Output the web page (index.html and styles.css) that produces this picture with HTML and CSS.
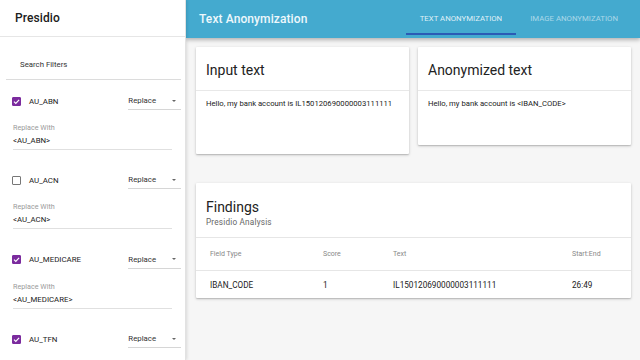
FILE: index.html
```html
<!DOCTYPE html>
<html lang="en">
<head>
<meta charset="utf-8">
<title>Presidio</title>
<link rel="stylesheet" href="styles.css">
</head>
<body>
<aside class="sidebar">
  <div class="side-head">Presidio</div>
  <div class="search">Search Filters</div>
  <div class="filters">
    <div class="filter">
      <div class="row">
        <span class="check on"><svg viewBox="0 0 10 10" width="9" height="9"><path d="M2.2 5.2 L4.2 7.1 L7.9 3.1" fill="none" stroke="#fff" stroke-width="1.3"/></svg></span>
        <span class="name">AU_ABN</span>
        <span class="select">Replace<span class="arrow"></span></span>
      </div>
      <div class="field"><div class="flabel">Replace With</div><div class="fvalue">&lt;AU_ABN&gt;</div></div>
    </div>
    <div class="filter">
      <div class="row">
        <span class="check"></span>
        <span class="name">AU_ACN</span>
        <span class="select">Replace<span class="arrow"></span></span>
      </div>
      <div class="field"><div class="flabel">Replace With</div><div class="fvalue">&lt;AU_ACN&gt;</div></div>
    </div>
    <div class="filter">
      <div class="row">
        <span class="check on"><svg viewBox="0 0 10 10" width="9" height="9"><path d="M2.2 5.2 L4.2 7.1 L7.9 3.1" fill="none" stroke="#fff" stroke-width="1.3"/></svg></span>
        <span class="name">AU_MEDICARE</span>
        <span class="select">Replace<span class="arrow"></span></span>
      </div>
      <div class="field"><div class="flabel">Replace With</div><div class="fvalue">&lt;AU_MEDICARE&gt;</div></div>
    </div>
    <div class="filter">
      <div class="row">
        <span class="check on"><svg viewBox="0 0 10 10" width="9" height="9"><path d="M2.2 5.2 L4.2 7.1 L7.9 3.1" fill="none" stroke="#fff" stroke-width="1.3"/></svg></span>
        <span class="name">AU_TFN</span>
        <span class="select">Replace<span class="arrow"></span></span>
      </div>
    </div>
  </div>
</aside>
<main class="main">
  <header class="topbar">
    <div class="title">Text Anonymization</div>
    <nav class="tabs">
      <span class="tab active">Text Anonymization</span>
      <span class="tab">Image Anonymization</span>
    </nav>
  </header>
  <div class="content">
    <div class="cards">
      <section class="card">
        <h2 class="card-title">Input text</h2>
        <div class="card-body tall">Hello, my bank account is IL150120690000003111111</div>
      </section>
      <section class="card">
        <h2 class="card-title">Anonymized text</h2>
        <div class="card-body short">Hello, my bank account is &lt;IBAN_CODE&gt;</div>
      </section>
    </div>
    <section class="card findings">
      <div class="f-head">
        <h2 class="f-title">Findings</h2>
        <div class="f-sub">Presidio Analysis</div>
      </div>
      <div class="t-row t-head">
        <span>Field Type</span><span>Score</span><span>Text</span><span>Start:End</span>
      </div>
      <div class="t-row t-data">
        <span>IBAN_CODE</span><span>1</span><span>IL150120690000003111111</span><span>26:49</span>
      </div>
    </section>
  </div>
</main>
</body>
</html>
```

FILE: styles.css
```css
* { box-sizing: border-box; }
html, body { margin: 0; padding: 0; }
body {
  width: 640px;
  height: 360px;
  overflow: hidden;
  display: flex;
  font-family: Roboto, "Liberation Sans", sans-serif;
  color: #222;
  background: #f6f6f6;
}
.sidebar {
  width: 186px;
  flex: none;
  height: 360px;
  overflow: hidden;
  background: #fff;
  border-right: 1px solid #e2e2e2;
  box-shadow: 1px 0 3px rgba(0,0,0,0.12);
  position: relative;
  z-index: 2;
}
.side-head {
  height: 37px;
  border-bottom: 1px solid #e6e6e6;
  display: flex;
  align-items: center;
  padding-left: 15px;
  font-size: 12px;
  font-weight: 500;
  letter-spacing: 0.1px;
  color: #202020;
}
.search {
  margin: 0 4px 0 6px;
  padding: 22px 0 9px 14px;
  line-height: 11px;
  font-size: 7.8px;
  color: #333;
  border-bottom: 1px solid #dcdcdc;
}
.filters {
  display: flex;
  flex-direction: column;
  gap: 21.4px;
  padding-top: 12px;
}
.row {
  height: 18px;
  display: flex;
  align-items: center;
  padding-left: 12px;
}
.check {
  width: 9px;
  height: 9px;
  border: 1.3px solid #777;
  border-radius: 1px;
  display: flex;
  align-items: center;
  justify-content: center;
  flex: none;
}
.check.on {
  background: #7b2b9e;
  border-color: #7b2b9e;
}
.check svg { display: block; flex: none; }
.name {
  margin-left: 8px;
  font-size: 7.9px;
  color: #222;
  width: 100px;
}
.select {
  margin-left: auto;
  margin-right: 4px;
  width: 53px;
  height: 18px;
  display: flex;
  align-items: center;
  font-size: 7.8px;
  color: #333;
  border-bottom: 1px solid #d6d6d6;
}
.arrow {
  margin-left: auto;
  margin-right: 5px;
  width: 0;
  height: 0;
  border-left: 2.5px solid transparent;
  border-right: 2.5px solid transparent;
  border-top: 2.5px solid #666;
}
.field {
  margin: 13px 0 0 13px;
  width: 159px;
  padding-bottom: 3px;
  border-bottom: 1px solid #e0e0e0;
}
.flabel {
  line-height: 9px;
  font-size: 7.2px;
  color: #9a9a9a;
}
.fvalue {
  margin-top: 4px;
  line-height: 10px;
  font-size: 7.8px;
  color: #222;
}
.main {
  flex: 1;
  display: flex;
  flex-direction: column;
  min-width: 0;
}
.topbar {
  height: 38px;
  flex: none;
  background: #44aacf;
  box-shadow: 0 2px 4px rgba(0,0,0,0.28);
  display: flex;
  align-items: flex-start;
  padding-left: 13px;
  padding-right: 8px;
  position: relative;
  z-index: 1;
}
.title {
  height: 37px;
  display: flex;
  align-items: center;
  font-size: 12px;
  font-weight: 500;
  color: #eef8fc;
  letter-spacing: 0.1px;
}
.tabs {
  margin-left: auto;
  display: flex;
}
.tab {
  height: 35px;
  padding: 0 14px;
  display: flex;
  align-items: center;
  padding-top: 3px;
  font-size: 7.8px;
  font-weight: 400;
  text-transform: uppercase;
  color: rgba(255,255,255,0.55);
  border-bottom: 2px solid transparent;
}
.tab.active {
  color: rgba(255,255,255,0.85);
  border-bottom-color: #2b5bb5;
}
.content {
  padding: 9px 9px 0 10px;
}
.cards {
  display: grid;
  grid-template-columns: 1fr 1fr;
  gap: 9px;
  align-items: start;
}
.card {
  background: #fff;
  box-shadow: 0 1px 3px rgba(0,0,0,0.22), 0 1px 1px rgba(0,0,0,0.1);
  border-radius: 1px;
}
.card-title {
  margin: 0;
  padding: 15px 0 11px 10px;
  line-height: 17px;
  font-size: 14px;
  font-weight: 400;
  color: #222;
  border-bottom: 1px solid #e8e8e8;
}
.card-body {
  padding: 7px 10px 0;
  line-height: 12px;
  font-size: 7.7px;
  color: #222;
}
.card-body.tall { height: 63px; }
.card-body.short { height: 54px; }
.findings {
  margin-top: 29px;
}
.f-head {
  padding: 15px 0 10px 10px;
  border-bottom: 1px solid #e6e6e6;
}
.f-title {
  margin: 0;
  line-height: 18px;
  font-size: 14px;
  font-weight: 400;
  color: #222;
}
.f-sub {
  margin-top: 1px;
  line-height: 10px;
  font-size: 8.2px;
  color: #666;
  letter-spacing: 0.2px;
}
.t-row {
  display: grid;
  grid-template-columns: 113px 70px 179px 1fr;
  padding-left: 14px;
  align-items: center;
}
.t-head {
  height: 33px;
  font-size: 7px;
  color: #888;
  border-bottom: 1px solid #e6e6e6;
}
.t-data {
  height: 27px;
  font-size: 8.2px;
  color: #222;
}
```
